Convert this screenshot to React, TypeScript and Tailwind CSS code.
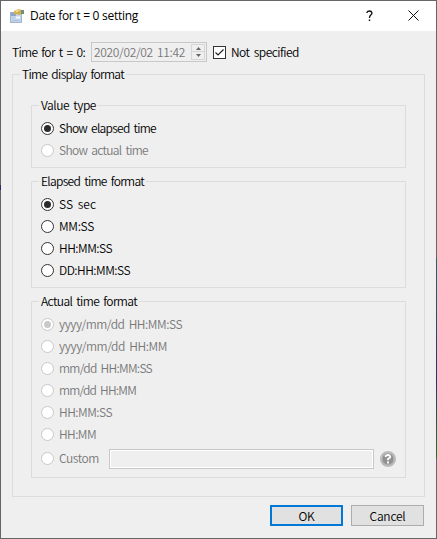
import { useLayoutEffect, useRef, useState } from "react";
import type { ReactNode } from "react";

// Label whose letter spacing is adjusted so that it spans the given width.
function Label({ text, width, className = "" }: { text: string; width: number; className?: string }) {
  const ref = useRef<HTMLSpanElement>(null);
  const [spacing, setSpacing] = useState(0);
  useLayoutEffect(() => {
    if (ref.current) {
      const natural = ref.current.getBoundingClientRect().width;
      setSpacing((s) => s + (width - natural) / text.length);
    }
  }, [text, width]);
  return (
    <span ref={ref} style={{ letterSpacing: spacing }} className={`inline-block shrink-0 whitespace-pre ${className}`}>
      {text}
    </span>
  );
}

function Radio({ text, width, checked = false, disabled = false, className = "" }: {
  text: string; width: number; checked?: boolean; disabled?: boolean; className?: string;
}) {
  return (
    <div className={`flex h-[22px] items-start pt-1 ${disabled ? "text-[#787878]" : "text-black"} ${className}`}>
      <span className={`flex size-[13px] shrink-0 items-center justify-center rounded-full border bg-white ${disabled ? "border-[#c8c8c8]" : "border-[#333]"}`}>
        {checked && <span className={`size-[7px] rounded-full ${disabled ? "bg-[#c8c8c8]" : "bg-[#2b2b2b]"}`} />}
      </span>
      <Label text={text} width={width} className="ml-[5px] leading-3" />
    </div>
  );
}

function Group({ title, width, className, children }: { title: string; width: number; className: string; children: ReactNode }) {
  return (
    <section className={`border border-[#dcdcdc] ${className}`}>
      <h2 className="-mt-[7px] ml-[7px] flex h-3 w-fit bg-[#efefef] px-[2px]">
        <Label text={title} width={width} className="leading-[11px]" />
      </h2>
      {children}
    </section>
  );
}

export default function App() {
  return (
    <div className="relative flex h-[539px] w-[437px] flex-col border border-[#666] bg-[#efefef] font-['Noto_Sans_CJK_JP','Liberation_Sans',sans-serif] text-[12px] font-[350] text-black [word-spacing:2px]">
      <span className="absolute top-[257px] -right-px h-[200px] w-px bg-linear-to-b from-[#176a72] via-[#20356e] via-60% to-[#1c7a16]" />
      <span className="absolute top-[184px] -left-px h-[5px] w-px bg-[#2b2b60]" />
      <header className="flex h-[30px] shrink-0 items-center bg-white pl-2 font-normal [word-spacing:0px]">
        <svg width="16" height="16" viewBox="0 0 16 16" className="shrink-0">
          <rect x="1.5" y="4.5" width="11" height="10" fill="#c3d5ea" stroke="#a3b5cc" />
          <rect x="2" y="5" width="5" height="3" fill="#8ba5cc" />
          <path d="M3 10h2M3 12.5h8" stroke="#aec3de" />
          <path d="M7 9.5h4" stroke="#f5f8fc" strokeWidth="2" />
          <path d="M5 3l4-2 4 1v4l-3 1-2-1-2 1-1-2z" fill="#d3b04e" />
          <path d="M6 2.5l3-1 2 1-4 2z" fill="#f0dc90" />
          <path d="M12 2h3v4h-3z" fill="#6f8f7a" />
        </svg>
        <Label text="Date for t = 0 setting" width={108} className="ml-[5px] font-['Open_Sans','Noto_Sans',sans-serif] leading-4" />
        <svg width="9" height="12" viewBox="0 0 9 12" className="ml-[227px]" fill="none" stroke="#111" strokeWidth="1.3">
          <path d="M2 3V2.2Q2.5 1 4.5 1T7 3Q7 4 5.8 5T4.5 7.5V8" /><path d="M4.5 9.5V11" strokeWidth="1.5" />
        </svg>
        <svg width="11" height="11" viewBox="0 0 11 11" className="ml-[34px] -mt-px" stroke="#111"><path d="M.5.5l10 10M10.5.5l-10 10" /></svg>
      </header>

      <div className="mt-[11px] ml-[11px] flex h-5 shrink-0 items-center">
        <Label text="Time for t = 0:" width={73} className="leading-[14px]" />
        <div className="ml-[6px] flex h-5 w-[116px] items-center border border-[#c8c8c8] text-[#787878]">
          <Label text="2020/02/02 11:42" width={91} className="ml-[2px] leading-[14px]" />
          <div className="ml-[6px] flex h-4 w-[14px] flex-col border border-[#d6d6d6]">
            <div className="flex h-[7px] items-center justify-center border-b border-[#d6d6d6]">
              <svg width="5" height="3" viewBox="0 0 5 3"><path d="M0 3L2.5 0 5 3z" fill="#666" /></svg>
            </div>
            <div className="flex h-[7px] items-center justify-center">
              <svg width="5" height="3" viewBox="0 0 5 3"><path d="M0 0L2.5 3 5 0z" fill="#666" /></svg>
            </div>
          </div>
        </div>
        <span className="ml-[6px] flex size-[13px] items-center justify-center border border-[#333] bg-white">
          <svg width="11" height="11" viewBox="0 0 11 11" fill="none" stroke="#222" strokeWidth="1.2"><path d="M1.5 5.5l2.5 2.5 5.5-5.5" /></svg>
        </span>
        <Label text="Not specified" width={68} className="ml-[5px] leading-[14px]" />
      </div>

      <Group title="Time display format" width={102} className="mt-[12px] ml-[11px] h-[423px] w-[413px] shrink-0">
        <div className="mt-[25px] ml-[18px] flex flex-col gap-[13px]">
          <Group title="Value type" width={55} className="h-[63px] w-[375px]">
            <div className="mt-[7px] ml-[9px]">
              <Radio text="Show elapsed time" width={97} checked />
              <Radio text="Show actual time" width={89} disabled />
            </div>
          </Group>
          <Group title="Elapsed time format" width={103} className="h-[107px] w-[375px]">
            <div className="mt-[7px] ml-[9px]">
              <Radio text="SS sec" width={37} checked />
              <Radio text="MM:SS" width={35} />
              <Radio text="HH:MM:SS" width={53} />
              <Radio text="DD:HH:MM:SS" width={71} />
            </div>
          </Group>
          <Group title="Actual time format" width={96} className="h-[177px] w-[375px]">
            <div className="mt-[7px] ml-[9px]">
              <Radio text="yyyy/mm/dd HH:MM:SS" width={123} checked disabled />
              <Radio text="yyyy/mm/dd HH:MM" width={108} disabled />
              <Radio text="mm/dd HH:MM:SS" width={93} disabled />
              <Radio text="mm/dd HH:MM" width={77} disabled />
              <Radio text="HH:MM:SS" width={53} disabled />
              <Radio text="HH:MM" width={37} disabled />
              <div className="mt-[2px] flex">
                <Radio text="Custom" width={40} disabled />
                <div className="mt-px ml-[10px] h-5 w-[265px] border border-[#c8c8c8] bg-[#efefef] outline-1 -outline-offset-2 outline-white" />
                <svg width="16" height="16" viewBox="0 0 16 16" className="mt-[3px] ml-[6px]">
                  <circle cx="8" cy="8" r="7.3" fill="#929292" stroke="#bcbcbc" strokeWidth="1.4" />
                  <circle cx="8" cy="8" r="6.2" fill="none" stroke="#d8d8d8" strokeWidth=".7" />
                  <path d="M5.7 6V4.8Q8 3.2 9.7 4.7T8 8V9.3" fill="none" stroke="#fff" strokeWidth="1.8" />
                  <path d="M8 10.5v2" stroke="#fff" strokeWidth="1.9" />
                </svg>
              </div>
            </div>
          </Group>
        </div>
      </Group>

      <footer className="mt-2 mr-3 flex justify-end gap-2">
        <button className="flex h-[21px] w-[73px] items-center justify-center border-2 border-[#0078d7] bg-[#e1e1e1]">
          <Label text="OK" width={16} className="leading-[14px]" />
        </button>
        <button className="flex h-[21px] w-[73px] items-center justify-center border border-[#adadad] bg-[#e1e1e1]">
          <Label text="Cancel" width={36} className="leading-[14px]" />
        </button>
      </footer>
    </div>
  );
}
